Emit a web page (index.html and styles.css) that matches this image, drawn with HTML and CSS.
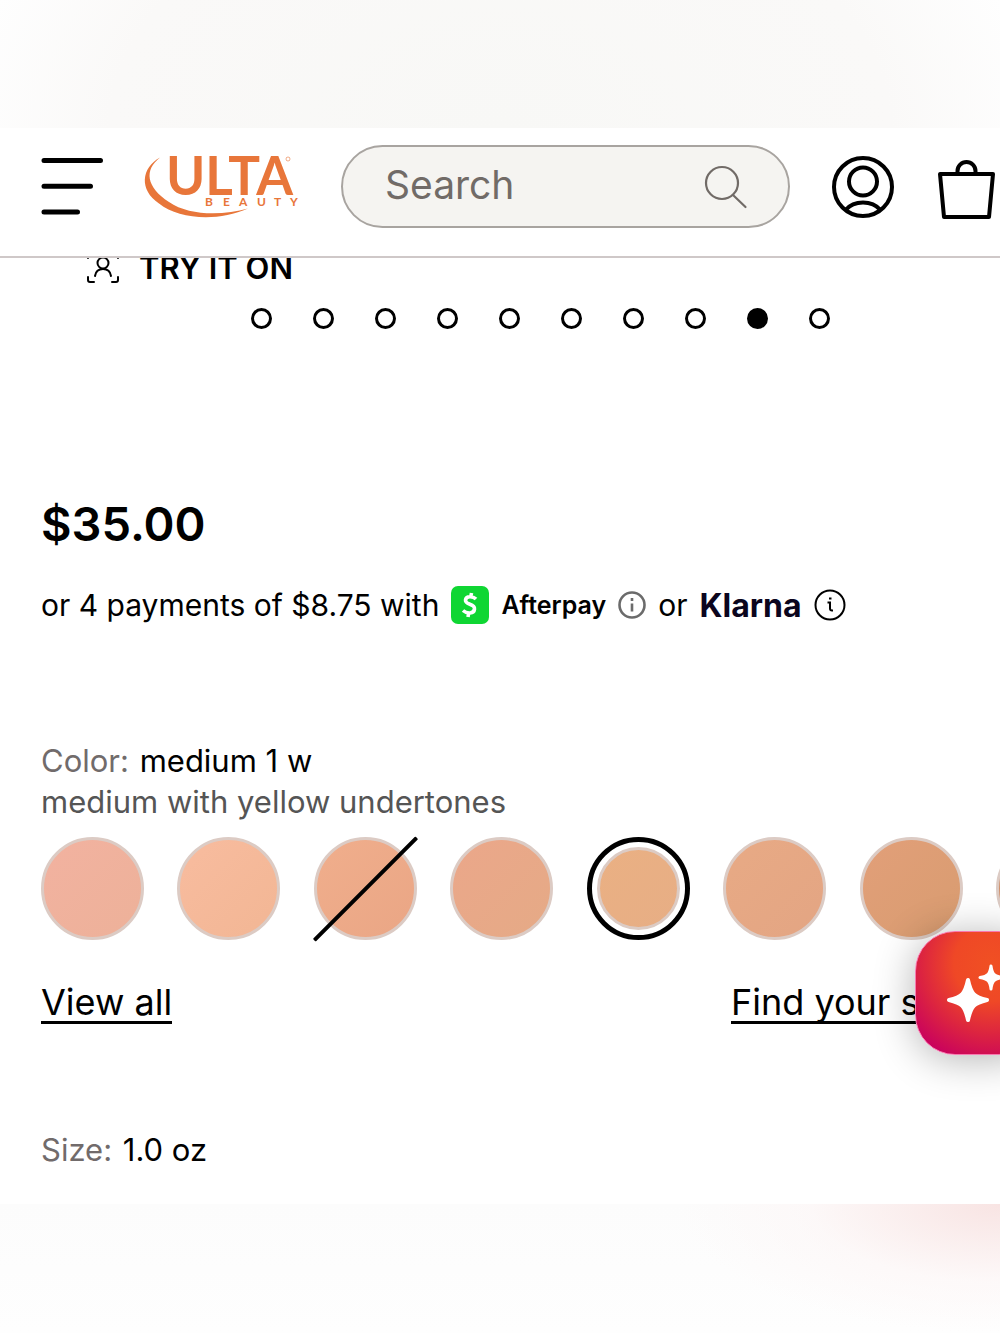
FILE: index.html
```html
<!DOCTYPE html>
<html lang="en">
<head>
    <meta charset="UTF-8">
    <meta name="viewport" content="width=device-width, initial-scale=1.0">
    <title>Ulta Beauty</title>
    <link rel="stylesheet" href="styles.css">
</head>
<body>
    <div class="band band-top"></div>

    <header class="header">
        <button class="icon-button" type="button" aria-label="Menu">
            <svg width="62" height="60" viewBox="0 0 62 60" fill="none" stroke="#000" stroke-width="5" stroke-linecap="round">
                <path d="M3 3.500H59.500M3 29.200H49.500M3 55H36.500"/>
            </svg>
        </button>
        <a class="logo" href="#" aria-label="Ulta Beauty">
            <svg width="154" height="66" viewBox="0 0 154 66" fill="#e8763a">
                <path d="M15 3.500C-4 14-6 36 14 49.500C34 65.500 73 68 103 54.500C78 61.500 44 62 24 48C1 33-1 16 15 3.500Z"/>
                <text class="logo-name" x="21" y="41">ULTA</text>
                <text class="logo-sub" x="60 78 94 112 129 145" y="52">BEAUTY</text>
                <circle cx="143" cy="5" r="2" fill="none" stroke="#e8763a" stroke-width="0.6"/>
            </svg>
        </a>
        <form class="search">
            <input class="search-input" type="search" placeholder="Search" aria-label="Search">
            <button class="icon-button" type="submit" aria-label="Submit search">
                <svg width="44" height="44" viewBox="0 0 44 44" fill="none" stroke="#716b67" stroke-width="2.2" stroke-linecap="round">
                    <circle cx="18" cy="18" r="16"/>
                    <path d="M29 30L41.500 42"/>
                </svg>
            </button>
        </form>
        <button class="icon-button" type="button" aria-label="Account">
            <svg width="62" height="62" viewBox="0 0 62 62" fill="none" stroke="#000" stroke-width="4">
                <circle cx="31" cy="31" r="29"/>
                <circle cx="31" cy="25.500" r="14"/>
                <path d="M13.500 54Q20 46.500 31 46.500T48.500 54"/>
            </svg>
        </button>
        <button class="icon-button" type="button" aria-label="Shopping bag">
            <svg width="64" height="66" viewBox="0 0 64 66" fill="none" stroke="#000" stroke-width="4" stroke-linejoin="round">
                <path d="M4 20H57L53 63H8Z"/>
                <path d="M21.500 19.500V17A9 9 0 0 1 39.500 17V19.500"/>
            </svg>
        </button>
    </header>

    <main class="product">
        <button class="try-on" type="button">
            <svg width="32" height="32" viewBox="0 0 32 32" fill="none" stroke="#000" stroke-width="2" stroke-linecap="round">
                <path d="M1 7V3Q1 1 3 1H6M26 1H29Q31 1 31 3V7M1 26V29Q1 31 3 31H7M31 26V29Q31 31 29 31H25"/>
                <circle cx="16" cy="12" r="5.500"/>
                <path d="M8 25Q9 18 16 18T24 25"/>
            </svg>
            TRY IT ON
        </button>

        <div class="dots">
            <button class="dot" type="button" aria-label="Image 1"></button>
            <button class="dot" type="button" aria-label="Image 2"></button>
            <button class="dot" type="button" aria-label="Image 3"></button>
            <button class="dot" type="button" aria-label="Image 4"></button>
            <button class="dot" type="button" aria-label="Image 5"></button>
            <button class="dot" type="button" aria-label="Image 6"></button>
            <button class="dot" type="button" aria-label="Image 7"></button>
            <button class="dot" type="button" aria-label="Image 8"></button>
            <button class="dot active" type="button" aria-label="Image 9"></button>
            <button class="dot" type="button" aria-label="Image 10"></button>
        </div>

        <p class="price">$35.00</p>

        <div class="payments">
            <span>or 4 payments of $8.75 with</span>
            <svg width="38" height="38" viewBox="0 0 38 38">
                <rect width="38" height="38" rx="7" fill="#0fd633"/>
                <path d="M25 13C22 10 15 9.500 14.500 14C14 19.500 24 17 23.500 23C23 28 16 28 12 24.500M20.500 7L19.700 11M17.700 27L17 31" fill="none" stroke="#fff" stroke-width="3.600"/>
            </svg>
            <span class="afterpay">Afterpay</span>
            <button class="icon-button" type="button" aria-label="About Afterpay">
                <svg width="28" height="28" viewBox="0 0 28 28" fill="none" stroke="#6b6b6b" stroke-width="2.600">
                    <circle cx="14" cy="14" r="12.500"/>
                    <path d="M14 12.500V20.500M14 7V10"/>
                </svg>
            </button>
            <span>or</span>
            <span class="klarna">Klarna</span>
            <button class="icon-button" type="button" aria-label="About Klarna">
                <svg width="32" height="32" viewBox="0 0 32 32" fill="none" stroke="#000" stroke-width="2">
                    <circle cx="16" cy="16" r="14.500"/>
                    <path d="M13.500 13.500H16V19.500Q16 21.500 18 21.500H19M15 9.500H17.500"/>
                </svg>
            </button>
        </div>

        <p class="option color-option"><span class="option-label">Color:</span> medium 1 w</p>
        <p class="option shade-note">medium with yellow undertones</p>

        <ul class="swatches">
            <li><input class="swatch fair" type="radio" name="shade" aria-label="fair"></li>
            <li><input class="swatch light-warm" type="radio" name="shade" aria-label="light warm"></li>
            <li class="sold-out"><input class="swatch light-medium" type="radio" name="shade" aria-label="light medium, sold out"></li>
            <li><input class="swatch medium-cool" type="radio" name="shade" aria-label="medium cool"></li>
            <li><input class="swatch medium-warm" type="radio" name="shade" aria-label="medium 1 w" checked></li>
            <li><input class="swatch medium" type="radio" name="shade" aria-label="medium 2"></li>
            <li><input class="swatch tan" type="radio" name="shade" aria-label="tan"></li>
            <li><input class="swatch deep" type="radio" name="shade" aria-label="deep"></li>
        </ul>

        <div class="links">
            <a class="link" href="#">View all</a>
            <a class="link" href="#">Find your shade</a>
            <button class="assistant" type="button" aria-label="Beauty assistant">
                <svg width="64" height="60" viewBox="0 0 64 60" fill="#fff" stroke="#fff" stroke-width="3" stroke-linejoin="round">
                    <path d="M22 17C25 31 28 34 41 37C28 40 25 43 22 57C19 43 16 40 3 37C16 34 19 31 22 17Z" stroke-width="4"/>
                    <path d="M45 3C46 11 48 13 56 14.500C48 16 46 18 45 26C44 18 42 16 34 14.500C42 13 44 11 45 3Z"/>
                </svg>
            </button>
        </div>

        <p class="option size-option"><span class="option-label">Size:</span> 1.0 oz</p>
    </main>

    <div class="band band-bottom"></div>
</body>
</html>
```
FILE: styles.css
```css
* {
    box-sizing: border-box;
}
body {
    margin: 0;
    min-height: 100vh;
    display: flex;
    flex-direction: column;
    overflow-x: hidden;
    background: #fff;
    color: #000;
    font-family: Inter, "Liberation Sans", sans-serif;
    font-size: 30px;
}
p, ul {
    margin: 0;
    padding: 0;
}
svg {
    display: block;
    flex: none;
    overflow: visible;
}
button {
    padding: 0;
    border: 0;
    background: none;
    color: inherit;
    font: inherit;
}

/* soft bands above and below the page */
.band-top {
    height: 128px;
    background: radial-gradient(ellipse 60% 300% at 50% 100%, #f8f8f6 0%, #faf9f8 65%, #fefefe 90%);
}
.band-bottom {
    flex: 1;
    min-height: 128px;
    background: radial-gradient(ellipse 32% 100% at 100% 0, #f8e4e3, rgba(253, 246, 246, 0.6) 60%, transparent), linear-gradient(#fcfcfc, #fefefe);
}

/* header */
.header {
    position: relative;
    z-index: 2;
    display: flex;
    align-items: center;
    gap: 42px;
    padding: 17px 0 28px 41px;
    background: #fff;
    border-bottom: 2px solid #cfc8c8;
}
.icon-button {
    flex: none;
}
.logo-name {
    font-family: Lato, sans-serif;
    font-size: 53px;
    font-weight: 700;
}
.logo-sub {
    font-family: Lato, sans-serif;
    font-size: 12px;
    font-weight: 700;
}
.search {
    flex: 1;
    min-width: 0;
    display: flex;
    align-items: center;
    height: 83px;
    padding: 0 40px 0 42px;
    background: #f5f4f1;
    border: 2px solid #a8a4a0;
    border-radius: 42px;
}
.search-input {
    flex: 1;
    min-width: 0;
    padding: 0 0 4px;
    border: 0;
    outline: 0;
    background: none;
    font: inherit;
    font-size: 39px;
}
.search-input::placeholder {
    color: #716b67;
    opacity: 1;
}

/* product */
.product {
    position: relative;
    overflow: hidden;
    padding: 0 41px 34px;
    margin-top: -12px;
}
.try-on {
    display: flex;
    align-items: center;
    gap: 20px;
    height: 42px;
    margin-left: 46px;
    font-size: 31px;
    font-weight: 600;
}
.dots {
    display: flex;
    justify-content: center;
    gap: 41px;
    padding-left: 80px;
    margin-top: 20px;
}
.dot {
    width: 21px;
    height: 21px;
    border: 3px solid #000;
    border-radius: 50%;
}
.dot.active {
    background: #000;
}
.price {
    margin-top: 167px;
    font-size: 47px;
    font-weight: 600;
    line-height: 56px;
}
.payments {
    display: flex;
    align-items: center;
    gap: 12px;
    height: 40px;
    margin-top: 33px;
}
.afterpay {
    font-size: 25px;
    font-weight: 600;
}
.klarna {
    color: #0b051d;
    font-size: 32px;
    font-weight: 700;
}
.option {
    font-size: 31px;
    line-height: 41px;
}
.option-label {
    margin-right: 2px;
    color: #716b6b;
}
.color-option {
    margin-top: 115px;
}
.shade-note {
    color: #555;
}
.swatches {
    display: flex;
    justify-content: space-between;
    margin: 15px -140px 0 0;
    list-style: none;
}
.swatches li {
    position: relative;
    height: 103px;
}
.swatch {
    appearance: none;
    width: 103px;
    height: 103px;
    margin: 0;
    border: 3px solid #dccbc4;
    border-radius: 50%;
}
.swatch:checked {
    width: 83px;
    height: 83px;
    margin: 10px;
    outline: 5px solid #000;
    outline-offset: 5px;
}
.sold-out::after {
    content: "";
    position: absolute;
    top: 50px;
    left: -21px;
    width: 145px;
    height: 4px;
    border-radius: 1px;
    background: #000;
    transform: rotate(-45deg);
}
.fair { background: linear-gradient(135deg, #f2b2a0, #edb199); }
.light-warm { background: linear-gradient(135deg, #f8bc9f, #f2b694); }
.light-medium { background: linear-gradient(135deg, #f0ae8c, #eaa685); }
.medium-cool { background: linear-gradient(135deg, #eba78a, #e5aa86); }
.medium-warm { background: linear-gradient(135deg, #eab083, #e7ae85); }
.medium { background: linear-gradient(135deg, #e8aa85, #e3a583); }
.tan { background: linear-gradient(135deg, #e29f79, #d89c70); }
.deep { background: #d0906a; }

.links {
    position: relative;
    display: flex;
    justify-content: space-between;
    margin-top: 44px;
    margin-right: -45px;
}
.link {
    border-bottom: 3px solid #000;
    color: #000;
    font-size: 36px;
    line-height: 37px;
    text-decoration: none;
}
.assistant {
    position: absolute;
    top: -53px;
    right: -35px;
    width: 124px;
    height: 124px;
    padding-left: 30px;
    border: 1px solid #f87ab0;
    border-radius: 40px;
    background: radial-gradient(circle at 62% 26%, #f05023 0, #ef4826 32%, #dc2440 60%, #c8005f 88%);
    box-shadow: 0 4px 40px rgba(0, 0, 0, 0.3);
}
.size-option {
    margin-top: 105px;
}
```
